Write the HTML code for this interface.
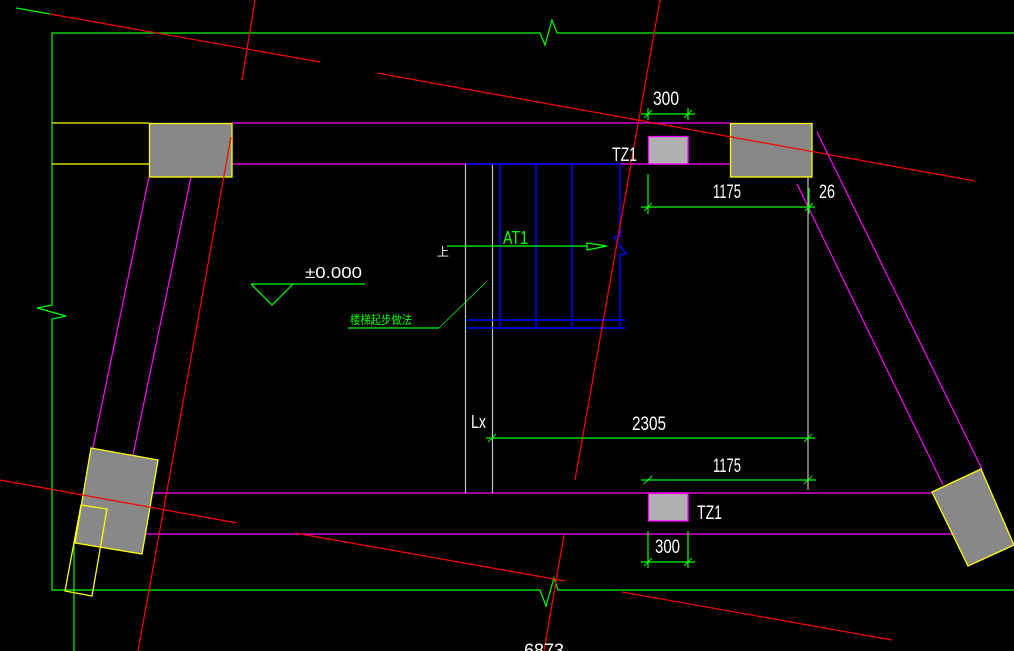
<!DOCTYPE html>
<html><head><meta charset="utf-8"><style>html,body{margin:0;padding:0;background:#000;overflow:hidden}svg{display:block}</style></head>
<body>
<svg width="1014" height="651" viewBox="0 0 1014 651" xmlns="http://www.w3.org/2000/svg" font-family="Liberation Sans, sans-serif">
<rect width="1014" height="651" fill="#000"/>
<g fill="none" stroke-width="1.2">
<!-- green frame -->
<g stroke="#00ff00">
<polyline points="1014,33 557,33 552,20 545,45 540,33 52,33 52,305 37,308 66,316 52,319 52,590 540,590 546,606 554,578 558,590 1014,590"/>
<line x1="74" y1="543" x2="74" y2="651"/>
</g>
<!-- beams -->
<g stroke="#ffff00">
<line x1="52" y1="123" x2="149" y2="123"/>
<line x1="52" y1="164" x2="149" y2="164"/>
</g>
<g stroke="#ff00ff">
<line x1="232" y1="123" x2="730" y2="123"/>
<line x1="232" y1="164" x2="730" y2="164"/>
<line x1="152" y1="493" x2="932" y2="493"/>
<line x1="146" y1="534" x2="968" y2="534"/>
<line x1="149" y1="177" x2="91" y2="457"/>
<line x1="191" y1="177" x2="133" y2="455"/>
<line x1="817" y1="132" x2="982" y2="469"/>
<line x1="797" y1="184" x2="943" y2="485"/>
</g>
<!-- gray lines -->
<g stroke="#c0c0c0">
<line x1="465.5" y1="164" x2="465.5" y2="493"/>
<line x1="492.5" y1="164" x2="492.5" y2="493"/>
<line x1="808" y1="177" x2="808" y2="490"/>
</g>
<!-- blue stairs -->
<g stroke="#0000ff" stroke-width="1.5">
<line x1="466" y1="164" x2="620" y2="164"/>
<line x1="500" y1="164" x2="500" y2="328"/>
<line x1="536" y1="164" x2="536" y2="328"/>
<line x1="572" y1="164" x2="572" y2="328"/>
<polyline points="620,164 620,236 614,237 626,254 620,255 620,328"/>
<line x1="466" y1="320" x2="625" y2="320"/>
<line x1="466" y1="328" x2="625" y2="328"/>
</g>
</g>
<!-- columns -->
<g stroke="#ffff00" stroke-width="1.3">
<rect x="149.5" y="123.5" width="82.5" height="53.5" fill="#888"/>
<rect x="730.5" y="123.5" width="81.5" height="53.5" fill="#888"/>
<polygon points="91,448 158,460 142,554 75,543" fill="#888"/>
<polygon points="81,505 107,509 92,596 65,591" fill="none"/>
<polygon points="932,492 981,469 1014,545 968,566" fill="#888"/>
</g>
<g stroke="#ff00ff" stroke-width="1.3" fill="#b0b0b0">
<rect x="648.5" y="136.5" width="39.5" height="27.5"/>
<rect x="648.5" y="493.5" width="39.5" height="27.5"/>
</g>
<!-- red axis lines -->
<g stroke="#ff0000" stroke-width="1.2" fill="none">
<line x1="16" y1="8" x2="50" y2="14" stroke="#00ff00"/>
<line x1="50" y1="14" x2="320" y2="62"/>
<line x1="377" y1="73" x2="975" y2="181"/>
<line x1="255" y1="0" x2="242" y2="80"/>
<line x1="231" y1="137" x2="138" y2="651"/>
<line x1="660" y1="0" x2="575" y2="480"/>
<line x1="0" y1="480" x2="237" y2="523"/>
<line x1="295" y1="533" x2="565" y2="581"/>
<line x1="622" y1="592" x2="892" y2="640"/>
<line x1="564" y1="535" x2="544" y2="651"/>
</g>
<!-- dimensions -->
<g stroke="#00ff00" stroke-width="1.2" fill="none">
<line x1="641" y1="114" x2="695" y2="114"/><line x1="648" y1="108" x2="648" y2="120"/><line x1="688" y1="108" x2="688" y2="120"/>
<line x1="641" y1="207" x2="815" y2="207"/><line x1="648" y1="174" x2="648" y2="214"/><line x1="809" y1="188" x2="809" y2="214"/>
<line x1="486" y1="438" x2="815" y2="438"/>
<line x1="641" y1="480" x2="816" y2="480"/>
<line x1="641" y1="562" x2="695" y2="562"/><line x1="648" y1="531" x2="648" y2="568"/><line x1="688" y1="531" x2="688" y2="568"/>
<g stroke-width="1">
<line x1="644" y1="118" x2="652" y2="110"/><line x1="684" y1="118" x2="692" y2="110"/>
<line x1="644" y1="211" x2="652" y2="203"/><line x1="805" y1="211" x2="813" y2="203"/>
<line x1="488" y1="442" x2="496" y2="434"/><line x1="804" y1="442" x2="812" y2="434"/>
<line x1="644" y1="484" x2="652" y2="476"/><line x1="804" y1="484" x2="812" y2="476"/>
<line x1="644" y1="566" x2="652" y2="558"/><line x1="684" y1="566" x2="692" y2="558"/>
</g>
<line x1="447" y1="246" x2="587" y2="246"/>
<polygon points="587,243 587,250 607,246"/>
<line x1="251" y1="284" x2="365" y2="284"/>
<polyline points="251,284 272,305 293,284"/>
<line x1="348" y1="328" x2="439" y2="328"/>
<line x1="439" y1="328" x2="486" y2="282" stroke-width="0.8"/>
</g>
<!-- texts -->
<g fill="#fff" font-size="19">
<text x="653" y="105" textLength="26" lengthAdjust="spacingAndGlyphs">300</text>
<text x="612" y="161" textLength="25" lengthAdjust="spacingAndGlyphs">TZ1</text>
<text x="713" y="198" textLength="28" lengthAdjust="spacingAndGlyphs">1175</text>
<text x="819" y="198" textLength="16" lengthAdjust="spacingAndGlyphs">26</text>
<text x="632" y="430" textLength="34" lengthAdjust="spacingAndGlyphs">2305</text>
<text x="713" y="472" textLength="28" lengthAdjust="spacingAndGlyphs">1175</text>
<text x="697" y="519" textLength="25" lengthAdjust="spacingAndGlyphs">TZ1</text>
<text x="655" y="553" textLength="25" lengthAdjust="spacingAndGlyphs">300</text>
<text x="524" y="657" textLength="40" lengthAdjust="spacingAndGlyphs">6873</text>
<text x="471" y="428" font-size="18" textLength="15" lengthAdjust="spacingAndGlyphs">Lx</text>
<text x="305" y="278" font-size="16" textLength="57" lengthAdjust="spacingAndGlyphs">±0.000</text>
<text x="437" y="256" font-size="12" font-family="Liberation Sans, Noto Sans CJK SC, sans-serif">上</text>
</g>
<text x="503" y="244" fill="#00ff00" font-size="18" textLength="25" lengthAdjust="spacingAndGlyphs">AT1</text>
<text x="350" y="324" fill="#00ff00" font-size="12" font-family="Liberation Sans, Noto Sans CJK SC, sans-serif" textLength="62" lengthAdjust="spacingAndGlyphs">楼梯起步做法</text>
</svg>
</body></html>
